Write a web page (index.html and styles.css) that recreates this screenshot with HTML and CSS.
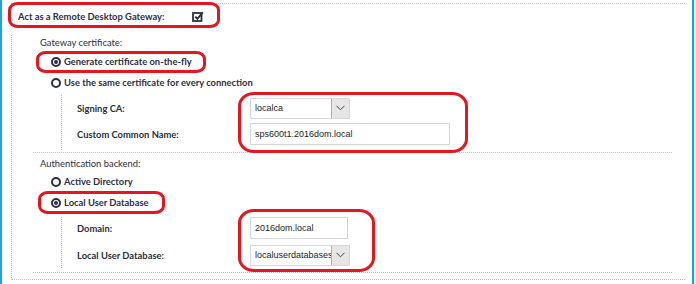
FILE: index.html
```html
<!DOCTYPE html>
<html lang="en">
<head>
  <meta charset="UTF-8" />
  <title>Remote Desktop Gateway</title>
  <link rel="stylesheet" href="styles.css">
</head>
<body>
  <div class="page">
    <div class="content">

      <div class="setting">
        <div class="setting-head">
          <span class="setting-label">Act as a Remote Desktop Gateway:</span>
          <svg class="checkbox" width="12" height="11" viewBox="0 0 12 11">
            <rect x="1" y="2" width="8.5" height="8" fill="none" stroke="#2b3040" stroke-width="1.8"/>
            <path d="M3.2 5.6 L5.4 7.8 L10.8 1.4" fill="none" stroke="#2b3040" stroke-width="2"/>
          </svg>
        </div>

        <div class="setting-body">
          <!-- Gateway certificate -->
          <div class="group group-first">
            <div class="group-title">Gateway certificate:</div>
            <div class="radio-row"><span class="radio checked"></span>Generate certificate on-the-fly</div>
            <div class="radio-row"><span class="radio"></span>Use the same certificate for every connection</div>
            <div class="subfields">
              <div class="field-row">
                <span class="field-label">Signing CA:</span>
                <div class="select">
                  <span class="select-value">localca</span>
                  <span class="select-arrow">
                    <svg width="9" height="6" viewBox="0 0 9 6"><path d="M0.5 0.8 L4.5 4.8 L8.5 0.8" fill="none" stroke="#444" stroke-width="1"/></svg>
                  </span>
                </div>
              </div>
              <div class="field-row">
                <span class="field-label">Custom Common Name:</span>
                <div class="input input-wide">sps600t1.2016dom.local</div>
              </div>
            </div>
          </div>

          <!-- Authentication backend -->
          <div class="group">
            <div class="group-title">Authentication backend:</div>
            <div class="radio-row"><span class="radio"></span>Active Directory</div>
            <div class="radio-row"><span class="radio checked"></span>Local User Database</div>
            <div class="subfields subfields-auth">
              <div class="field-row">
                <span class="field-label">Domain:</span>
                <div class="input">2016dom.local</div>
              </div>
              <div class="field-row">
                <span class="field-label">Local User Database:</span>
                <div class="select">
                  <span class="select-value">localuserdatabases</span>
                  <span class="select-arrow">
                    <svg width="9" height="6" viewBox="0 0 9 6"><path d="M0.5 0.8 L4.5 4.8 L8.5 0.8" fill="none" stroke="#444" stroke-width="1"/></svg>
                  </span>
                </div>
              </div>
            </div>
          </div>
        </div>
      </div>

    </div>

    <!-- red hand-drawn annotation marks over the form -->
    <div class="mark mark-gateway"></div>
    <div class="mark mark-generate"></div>
    <div class="mark mark-cert"></div>
    <div class="mark mark-localdb"></div>
    <div class="mark mark-domain"></div>
  </div>
</body>
</html>
```
FILE: styles.css
```css
:root {
  --text: #2b3040;
  --dots: 1px dotted #bdbdbd;
  --mark: #e4161f;
  --label-size: 9.4px;
}

body {
  margin: 0;
  background: #fff;
  font-family: "Lato", "Liberation Sans", sans-serif;
  color: var(--text);
}

.page {
  position: relative;
  width: 696px;
  height: 284px;
  display: flex;
  background: #e6e6e6;
  overflow: hidden;
}

.content {
  width: 690px;
  height: 100%;
  background: #fff;
  border-left: 2px solid #1da5d8;
  border-right: 2px solid #1da5d8;
}

/* outer setting block */
.setting {
  margin: 3px 0 0 9px;
  width: 674px;
  border-top: var(--dots);
}

.setting-head {
  height: 31px;
  display: flex;
  align-items: flex-start;
  padding: 6px 0 0 7px;
  box-sizing: border-box;
  font-size: var(--label-size);
  font-weight: 700;
  line-height: 14px;
}

.setting-label {
  width: 174px;
}

.checkbox {
  margin-top: 1px;
}

.setting-body {
  border-left: var(--dots);
  border-bottom: var(--dots);
  padding: 0 13px 6px 21px;
}

/* groups */
.group {
  border-bottom: var(--dots);
  padding: 4px 0 4px 7px;
}
.group-first {
  padding-top: 1px;
  padding-bottom: 2px;
}

.group-title {
  font-size: var(--label-size);
  line-height: 14px;
  height: 14px;
}

.radio-row {
  height: 21px;
  display: flex;
  align-items: center;
  padding-left: 11px;
  font-size: var(--label-size);
  font-weight: 700;
}
.group-first .group-title + .radio-row {
  margin-top: 1px;
}

.radio {
  width: 10px;
  height: 10px;
  box-sizing: border-box;
  border: 2px solid var(--text);
  border-radius: 50%;
  margin-right: 3px;
  display: flex;
  align-items: center;
  justify-content: center;
}
.radio.checked::after {
  content: "";
  width: 4px;
  height: 4px;
  border-radius: 50%;
  background: var(--text);
}

/* nested fields */
.subfields {
  margin: 2px 0 0 21px;
  border-left: var(--dots);
  padding: 2px 0 5px 15px;
  display: flex;
  flex-direction: column;
  gap: 4px;
}
.subfields-auth {
  margin-top: 4px;
  padding-top: 0;
  padding-bottom: 2px;
  gap: 5px;
}

.field-row {
  display: flex;
  align-items: center;
  height: 22px;
}

.field-label {
  width: 173px;
  font-size: var(--label-size);
  font-weight: 700;
}

.input,
.select {
  height: 22px;
  box-sizing: border-box;
  border: 1px solid #d6d6d6;
  background: #fff;
  font-family: "Liberation Sans", sans-serif;
  font-size: 9px;
  color: #1e1e1e;
  display: flex;
  align-items: center;
}

.input {
  width: 98px;
  padding-left: 4px;
}
.input-wide {
  width: 200px;
}

.select {
  width: 100px;
  height: 21px;
  overflow: hidden;
}
.select-value {
  flex: 1;
  padding-left: 4px;
  white-space: nowrap;
  overflow: hidden;
}
.select-arrow {
  width: 18px;
  height: 100%;
  box-sizing: border-box;
  border-left: 1px solid #adadad;
  background: #e6e6e6;
  display: flex;
  align-items: center;
  justify-content: center;
}

/* red hand-drawn annotation frames */
.mark {
  position: absolute;
  border: 3px solid var(--mark);
  border-radius: 10px / 8px;
  box-sizing: border-box;
}
.mark-gateway  { left: 8px;   top: 2px;   width: 212px; height: 26px; }
.mark-generate { left: 36px;  top: 51px;  width: 170px; height: 22px; }
.mark-cert     { left: 238px; top: 92px;  width: 230px; height: 61px; border-radius: 16px / 14px; }
.mark-localdb  { left: 38px;  top: 191px; width: 127px; height: 23px; }
.mark-domain   { left: 238px; top: 209px; width: 137px; height: 63px; border-radius: 16px / 14px; }
```
